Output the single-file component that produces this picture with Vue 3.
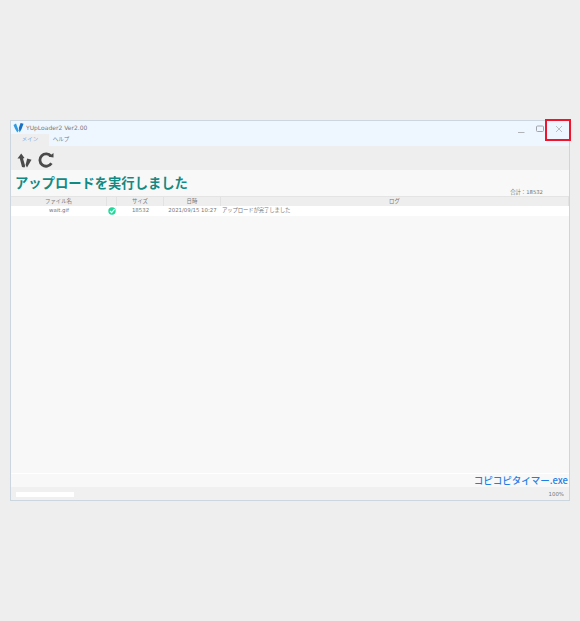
<template>
  <div class="page">
    <div class="window">
      <div class="titlebar">
        <div class="title-row">
          <svg class="logo" width="11" height="11" viewBox="0 0 11 11">
            <path d="M0.5 3 L3 1.5 L5.6 8.5 L4.4 10.5 Q2 7.5 0.5 3 Z" fill="#2f9be0" />
            <path d="M5.8 6 L7.6 1 L10.5 1.8 Q9 7 6.6 10.5 Z" fill="#1670c4" />
          </svg>
          <span class="app-name">YUpLoader2 Ver2.00</span>
        </div>
        <div class="tabs">
          <span class="tab active">メイン</span>
          <span class="tab">ヘルプ</span>
        </div>
        <div class="win-buttons">
          <svg width="8" height="8" viewBox="0 0 8 8"><path d="M1 7.5 H7.5" stroke="#b0b4b8" stroke-width="1" /></svg>
          <svg width="8" height="8" viewBox="0 0 8 8"><rect x="0.5" y="1" width="7" height="5.5" rx="1" fill="none" stroke="#a0a4a8" stroke-width="1" /></svg>
          <svg width="8" height="8" viewBox="0 0 8 8"><path d="M1 1 L7 7 M7 1 L1 7" stroke="#b4b8bc" stroke-width="0.9" /></svg>
        </div>
      </div>

      <div class="toolbar">
        <svg width="15" height="15" viewBox="0 0 15 15">
          <path d="M0.5 5.5 L4.2 0.5 L7.5 5 L6 5.4 L8.2 13 L7.4 14.5 L5 14 L2.8 5.6 Z" fill="#4a4a4a" />
          <path d="M8.6 12 L10.2 5.5 L14.5 6.8 L10 14.5 Z" fill="#4a4a4a" />
        </svg>
        <svg width="16" height="16" viewBox="0 0 16 16">
          <path d="M13 4.2 A6.2 6.2 0 1 0 13.4 11.3" fill="none" stroke="#4a4a4a" stroke-width="2.8" />
          <path d="M10.5 4.8 L15.5 5.5 L15.5 1 Z" fill="#4a4a4a" />
        </svg>
      </div>

      <div class="heading">
        <h1>アップロードを実行しました</h1>
        <span class="total">合計：18532</span>
      </div>

      <div class="table-head">
        <span class="col-name">ファイル名</span>
        <span class="col-icon"></span>
        <span class="col-size">サイズ</span>
        <span class="col-date">日時</span>
        <span class="col-log">ログ</span>
      </div>
      <div v-for="row in rows" :key="row.name" class="table-row">
        <span class="col-name">{{ row.name }}</span>
        <span class="col-icon">
          <svg width="8" height="8" viewBox="0 0 8 8">
            <circle cx="4" cy="4" r="3.7" fill="#1fd89a" />
            <path d="M2 4 L3.6 5.6 L6.6 2.2" fill="none" stroke="#ffffff" stroke-width="1.2" />
          </svg>
        </span>
        <span class="col-size">{{ row.size }}</span>
        <span class="col-date">{{ row.date }}</span>
        <span class="col-log left">{{ row.log }}</span>
      </div>

      <div class="spacer"></div>

      <div class="promo">コピコピタイマー.exe</div>

      <div class="statusbar">
        <div class="progress"></div>
        <span class="zoom-level">100%</span>
      </div>
    </div>
    <div class="highlight"></div>
  </div>
</template>

<script setup>
import { ref } from 'vue'

const rows = ref([
  {
    name: 'wait.gif',
    size: 18532,
    date: '2021/09/15 10:27',
    log: 'アップロードが完了しました'
  }
])
</script>

<style scoped>
.page {
  position: relative;
  width: 580px;
  height: 621px;
  padding: 120px 10px 0;
  box-sizing: border-box;
  background: #eeeeee;
  font-family: "Noto Sans CJK JP", "Noto Sans", sans-serif;
}

.window {
  display: flex;
  flex-direction: column;
  height: 381px;
  box-sizing: border-box;
  background: #f8f8f8;
  border: 1px solid #ccd6de;
}

.titlebar {
  position: relative;
  height: 25px;
  background: #eef7ff;
}

.title-row {
  display: flex;
  align-items: center;
  height: 13px;
  padding-left: 2px;
  gap: 2px;
}

.app-name {
  font-family: "DejaVu Sans", sans-serif;
  font-size: 6px;
  color: #777;
}

.tabs {
  display: flex;
  height: 12px;
}

.tab {
  width: 24px;
  padding-top: 1px;
  text-align: center;
  font-size: 5.5px;
  line-height: 9px;
  color: #777;
}

.tab.active {
  width: 38px;
  background: #eeeeee;
  color: #7aa8e8;
}

.win-buttons {
  position: absolute;
  top: 4px;
  right: 6px;
  display: flex;
  gap: 11px;
}

.toolbar {
  display: flex;
  align-items: center;
  gap: 6px;
  height: 24px;
  padding: 4px 0 0 6px;
  box-sizing: border-box;
  background: #eeeeee;
}

.heading {
  position: relative;
  height: 26px;
  padding-left: 4px;
  background: #f8f8f8;
}

.heading h1 {
  margin: 0;
  font-size: 13.3px;
  line-height: 25px;
  font-weight: 700;
  color: #128a84;
}

.total {
  position: absolute;
  right: 26px;
  bottom: 0;
  font-family: "DejaVu Sans", "Noto Sans CJK JP", sans-serif;
  font-size: 5.3px;
  line-height: 8px;
  color: #777;
}

.table-head,
.table-row {
  display: flex;
  font-family: "DejaVu Sans", "Noto Sans CJK JP", sans-serif;
  font-size: 5.4px;
  text-align: center;
  color: #777;
}

.table-head {
  height: 9px;
  line-height: 9px;
  background: #eeeeee;
  border-top: 1px solid #e4e4e4;
}

.table-head span {
  border-right: 1px solid #e2e2e2;
  box-sizing: border-box;
}

.table-row {
  height: 10px;
  line-height: 9px;
  background: #ffffff;
}

.col-name { width: 96px; }
.col-icon { width: 10px; display: flex; align-items: center; justify-content: center; }
.col-size { width: 47px; }
.col-date { width: 57px; white-space: nowrap; }
.col-log { flex: 1; }
.col-log.left { padding-left: 1px; text-align: left; letter-spacing: -0.15px; }

.spacer {
  flex: 1;
  border-bottom: 1px solid #ffffff;
}

.promo {
  height: 13px;
  padding-right: 1px;
  text-align: right;
  font-size: 9.5px;
  font-weight: 500;
  line-height: 13px;
  color: #1f7fe6;
}

.statusbar {
  display: flex;
  align-items: center;
  justify-content: space-between;
  height: 13px;
  padding: 0 5px;
  background: #f0f0f0;
}

.progress {
  width: 58px;
  height: 5px;
  margin-top: 1px;
  background: #ffffff;
}

.zoom-level {
  font-family: "DejaVu Sans", sans-serif;
  font-size: 5.4px;
  color: #777;
}

.highlight {
  position: absolute;
  left: 545px;
  top: 119px;
  width: 26px;
  height: 22px;
  box-sizing: border-box;
  border: 2px solid #f0142d;
}
</style>
